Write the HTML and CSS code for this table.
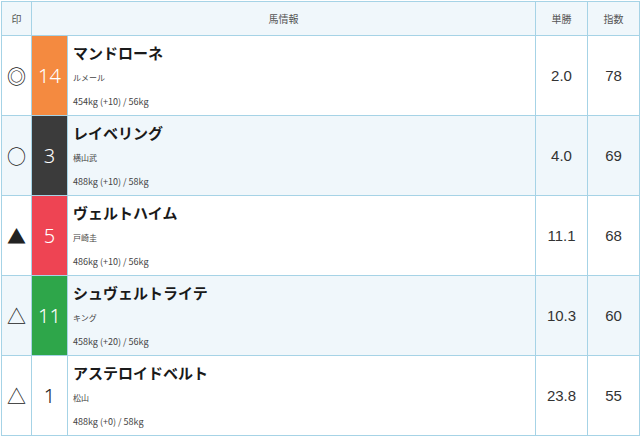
FILE: index.html
```html
<!DOCTYPE html>
<html lang="ja">
<head>
<meta charset="utf-8">
<link rel="stylesheet" href="styles.css">
</head>
<body>
<table class="race">
  <colgroup>
    <col class="c-mark"><col class="c-num"><col class="c-info"><col class="c-odds"><col class="c-idx">
  </colgroup>
  <thead>
    <tr><th>印</th><th colspan="2">馬情報</th><th>単勝</th><th>指数</th></tr>
  </thead>
  <tbody>
    <tr>
      <td class="mark">◎</td>
      <td class="num n-orange">14</td>
      <td class="info"><div class="name">マンドローネ</div><div class="jockey">ルメール</div><div class="weight">454kg (+10) / 56kg</div></td>
      <td class="val">2.0</td><td class="val">78</td>
    </tr>
    <tr class="alt">
      <td class="mark">○</td>
      <td class="num n-dark">3</td>
      <td class="info"><div class="name">レイベリング</div><div class="jockey">横山武</div><div class="weight">488kg (+10) / 58kg</div></td>
      <td class="val">4.0</td><td class="val">69</td>
    </tr>
    <tr>
      <td class="mark">▲</td>
      <td class="num n-red">5</td>
      <td class="info"><div class="name">ヴェルトハイム</div><div class="jockey">戸崎圭</div><div class="weight">486kg (+10) / 56kg</div></td>
      <td class="val">11.1</td><td class="val">68</td>
    </tr>
    <tr class="alt">
      <td class="mark">△</td>
      <td class="num n-green">11</td>
      <td class="info"><div class="name">シュヴェルトライテ</div><div class="jockey">キング</div><div class="weight">458kg (+20) / 56kg</div></td>
      <td class="val">10.3</td><td class="val">60</td>
    </tr>
    <tr>
      <td class="mark">△</td>
      <td class="num n-white">1</td>
      <td class="info"><div class="name">アステロイドベルト</div><div class="jockey">松山</div><div class="weight">488kg (+0) / 58kg</div></td>
      <td class="val">23.8</td><td class="val">55</td>
    </tr>
  </tbody>
</table>
</body>
</html>
```
FILE: styles.css
```css
html, body { margin: 0; padding: 0; background: #fff; }
body { padding: 1px 0 0 1px; font-family: "Noto Sans CJK JP", "Noto Sans", sans-serif; color: #222; }
.race { border-collapse: collapse; table-layout: fixed; width: 639px; }
.race td, .race th { border: 1px solid #a6d3e6; padding: 0; }
.c-mark { width: 30px; }
.c-num { width: 36px; }
.c-info { width: 468px; }
.c-odds { width: 52px; }
.c-idx { width: 52px; }
.race th { background: #f0f7fb; height: 33px; font-size: 10px; font-weight: normal; color: #555; text-align: center; }
.race td { height: 79px; }
.alt td { background: #f0f7fb; }
.mark { text-align: center; font-size: 19px; color: #222; font-family: "Noto Sans CJK JP", sans-serif; }
.num { text-align: center; font-family: "Noto Sans", sans-serif; font-weight: 300; font-size: 20px; color: #fff; }
.n-orange { background: #f48a40 !important; }
.n-dark { background: #3b3b3b !important; }
.n-red { background: #ee4453 !important; }
.n-green { background: #2ea64a !important; }
.n-white { background: #fff; color: #222; }
.info { padding-left: 5px !important; vertical-align: top; }
.name { font-size: 15px; font-weight: bold; line-height: 24px; margin-top: 5px; color: #1a1a1a; }
.jockey { font-size: 8px; line-height: 26px; color: #444; }
.weight { font-size: 9px; line-height: 22px; color: #444; }
.val { text-align: center; font-family: "Liberation Sans", sans-serif; font-size: 15px; color: #333; }
```
